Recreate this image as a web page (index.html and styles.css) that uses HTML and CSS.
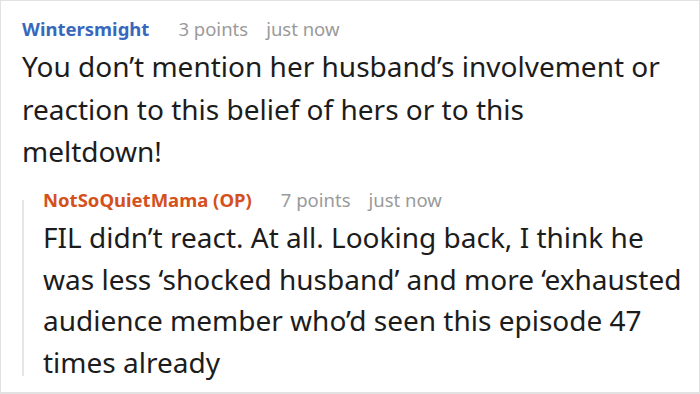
FILE: index.html
```html
<!DOCTYPE html>
<html>
<head>
<meta charset="utf-8">
<link rel="stylesheet" href="styles.css">
</head>
<body>
<div class="frame">
  <div class="comment">
    <div class="meta">
      <span class="user blue">Wintersmight</span>
      <span class="info">3 points</span>
      <span class="info">just now</span>
    </div>
    <p class="text main-text">You don’t mention her husband’s involvement or reaction to this belief of hers or to this meltdown!</p>
    <div class="reply">
      <div class="thread"></div>
      <div class="reply-body">
        <div class="meta">
          <span class="user orange">NotSoQuietMama (OP)</span>
          <span class="info">7 points</span>
          <span class="info">just now</span>
        </div>
        <p class="text reply-text">FIL didn’t react. At all. Looking back, I think he was less ‘shocked husband’ and more ‘exhausted audience member who’d seen this episode 47 times already</p>
      </div>
    </div>
  </div>
</div>
</body>
</html>
```

FILE: styles.css
```css
html, body {
  margin: 0;
  padding: 0;
  background: #fff;
}
.frame {
  box-sizing: border-box;
  width: 700px;
  height: 394px;
  border: 1px solid #e2e2e2;
  border-bottom-width: 2px;
  padding: 13px 12px 0 21px;
  font-family: "Noto Sans", "Open Sans", sans-serif;
  overflow: hidden;
}
.meta {
  display: flex;
  font-size: 18.5px;
  line-height: 30px;
  height: 30px;
  white-space: nowrap;
}
.user {
  font-weight: 700;
  margin-right: 29px;
}
.info {
  color: #9a9a9a;
  margin-right: 18px;
}
.blue { color: #3868bd; }
.orange { color: #d4501c; }
.text {
  margin: 0;
  font-size: 28px;
  color: #1c1c1c;
}
.main-text {
  margin-top: 1px;
  line-height: 42.5px;
  padding-right: 25px;
}
.reply {
  display: flex;
  margin-top: 12.6px;
}
.thread {
  flex: 0 0 2px;
  background: #e6e6e6;
  margin: 15px 0 7px 0;
}
.reply-body {
  flex: 1;
  padding-left: 19px;
}
.reply-text {
  margin-top: 2.4px;
  line-height: 41.5px;
}
```
